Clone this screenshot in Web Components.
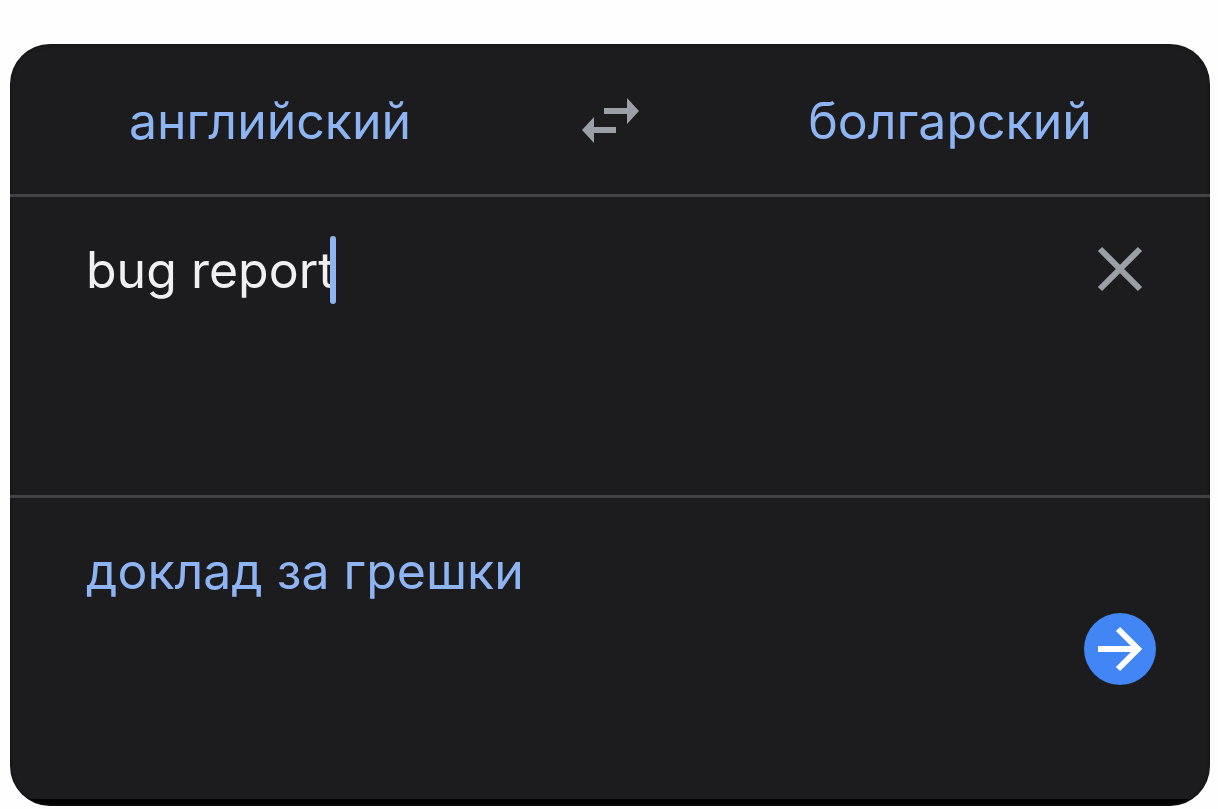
<!DOCTYPE html>
<html lang="ru">
<head>
<meta charset="utf-8">
<meta name="viewport" content="width=device-width, initial-scale=1">
<title>Переводчик</title>
<style>
  body { margin: 0; padding: 44px 8px 3px 10px; background: #fefefe; font-family: Inter, "Liberation Sans", sans-serif; font-size: 50px; line-height: 60px; }
</style>
</head>
<body>
<translator-card>
  <language-bar slot="languages">
    <span slot="from">английский</span>
    <span slot="to">болгарский</span>
  </language-bar>
  <source-field slot="source" value="bug report"></source-field>
  <translation-result slot="result">доклад за грешки</translation-result>
</translator-card>
<script>
function define(name, html, setup) {
  const template = document.createElement('template');
  template.innerHTML = html;
  customElements.define(name, class extends HTMLElement {
    constructor() {
      super();
      this.attachShadow({ mode: 'open' }).append(template.content.cloneNode(true));
    }
    connectedCallback() { if (setup) setup(this, this.shadowRoot); }
  });
}

define('translator-card', `
  <style>
    :host { display: block; --accent: #8db4f3; --muted: #9aa0a6; --line: #434345; }
    main { overflow: hidden; border-radius: 40px; padding-bottom: 7px; background: linear-gradient(#000, #000) bottom / 100% 7px no-repeat #1c1c1e; box-shadow: inset 0 0 3px 1px #141415; }
  </style>
  <main><slot name="languages"></slot><slot name="source"></slot><slot name="result"></slot></main>
`);

define('language-bar', `
  <style>
    :host { display: grid; grid-template-columns: 1fr 160px 1fr; align-items: center; justify-items: center; padding: 47px 0 43px; border-bottom: 3px solid var(--line); }
    button { font: inherit; color: var(--accent); background: none; border: 0; padding: 0; cursor: pointer; }
    .swap { display: flex; }
    svg { display: block; width: 60px; height: 60px; fill: var(--muted); }
  </style>
  <button type="button"><slot name="from"></slot></button>
  <button type="button" class="swap" aria-label="Поменять языки">
    <svg viewBox="0 0 60 60" aria-hidden="true"><path d="M24 17H47V7L59 20L47 33V23H24Z M36 42V36H14V26L2 39L14 52V42Z"/></svg>
  </button>
  <button type="button"><slot name="to"></slot></button>
`);

define('source-field', `
  <style>
    :host { display: flex; align-items: flex-start; justify-content: space-between; box-sizing: border-box; min-height: 301px; padding: 36px 54px 0 76px; border-bottom: 3px solid var(--line); }
    label { display: flex; align-items: center; height: 74px; min-width: 0; }
    input { field-sizing: content; font: inherit; color: #f0f0f2; background: none; border: 0; outline: 0; padding: 0; min-width: 0; height: 60px; caret-color: transparent; }
    .caret { flex: none; width: 6px; height: 68px; margin-left: -5px; border-radius: 3px; background: var(--accent); }
    button { display: flex; align-items: center; justify-content: center; width: 72px; height: 72px; padding: 0; background: none; border: 0; cursor: pointer; }
    svg { width: 48px; height: 48px; fill: none; stroke: var(--muted); stroke-width: 6; }
  </style>
  <label><input type="text" aria-label="Исходный текст"><span class="caret"></span></label>
  <button type="button" aria-label="Очистить"><svg viewBox="0 0 48 48" aria-hidden="true"><path d="M4 4L44 44M44 4L4 44"/></svg></button>
`, (host, root) => {
  const input = root.querySelector('input');
  input.value = host.getAttribute('value') || '';
  root.querySelector('button').onclick = () => { input.value = ''; input.focus(); };
});

define('translation-result', `
  <style>
    :host { display: flex; flex-direction: column; gap: 12px; box-sizing: border-box; min-height: 301px; padding: 43px 54px 0 76px; color: var(--accent); }
    p { margin: 0; }
    button { align-self: flex-end; width: 72px; height: 72px; padding: 0; border: 0; border-radius: 50%; background: #4285f4; cursor: pointer; }
    svg { display: block; width: 72px; height: 72px; fill: none; stroke: #fff; stroke-width: 6; }
  </style>
  <p><slot></slot></p>
  <button type="button" aria-label="Открыть перевод"><svg viewBox="0 0 72 72" aria-hidden="true"><path d="M14 36H54M34 16L54 36L34 56"/></svg></button>
`);
</script>
</body>
</html>
